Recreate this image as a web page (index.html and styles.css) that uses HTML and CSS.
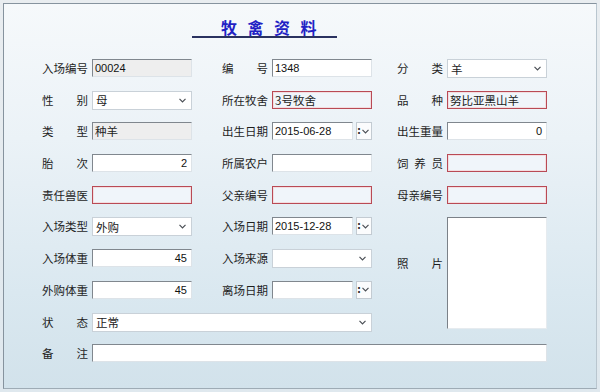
FILE: index.html
```html
<!DOCTYPE html>
<html lang="zh-CN">
<head>
<meta charset="utf-8">
<title>牧禽资料</title>
<link rel="stylesheet" href="styles.css">
</head>
<body>
<div class="frame">
  <div class="title">牧禽资料</div>
  <div class="form">
    <span class="lbl c1">入场编号</span>
    <div class="field ro txt">00024</div>
    <span class="lbl">编 号</span>
    <div class="field txt">1348</div>
    <span class="lbl">分 类</span>
    <div class="sel"><span>羊</span><svg class="chev" viewBox="0 0 7 5"><path d="M0.5 0.8 L3.5 3.8 L6.5 0.8" /></svg></div>

    <span class="lbl c1">性 别</span>
    <div class="sel"><span>母</span><svg class="chev" viewBox="0 0 7 5"><path d="M0.5 0.8 L3.5 3.8 L6.5 0.8" /></svg></div>
    <span class="lbl">所在牧舍</span>
    <div class="field req">3号牧舍</div>
    <span class="lbl">品 种</span>
    <div class="field req">努比亚黑山羊</div>

    <span class="lbl c1">类 型</span>
    <div class="field ro">种羊</div>
    <span class="lbl">出生日期</span>
    <div class="date"><div class="field txt">2015-06-28</div><div class="spin"><span class="colon">:</span><svg class="chev" viewBox="0 0 7 5"><path d="M0.5 0.8 L3.5 3.8 L6.5 0.8" /></svg></div></div>
    <span class="lbl">出生重量</span>
    <div class="field txt num">0</div>

    <span class="lbl c1">胎 次</span>
    <div class="field txt num">2</div>
    <span class="lbl">所属农户</span>
    <div class="field"></div>
    <span class="lbl">饲 养 员</span>
    <div class="field req"></div>

    <span class="lbl c1">责任兽医</span>
    <div class="field req"></div>
    <span class="lbl">父亲编号</span>
    <div class="field req"></div>
    <span class="lbl">母亲编号</span>
    <div class="field req"></div>

    <span class="lbl c1">入场类型</span>
    <div class="sel"><span>外购</span><svg class="chev" viewBox="0 0 7 5"><path d="M0.5 0.8 L3.5 3.8 L6.5 0.8" /></svg></div>
    <span class="lbl">入场日期</span>
    <div class="date"><div class="field txt">2015-12-28</div><div class="spin"><span class="colon">:</span><svg class="chev" viewBox="0 0 7 5"><path d="M0.5 0.8 L3.5 3.8 L6.5 0.8" /></svg></div></div>
    <div class="photo"></div>

    <span class="lbl c1">入场体重</span>
    <div class="field txt num">45</div>
    <span class="lbl">入场来源</span>
    <div class="sel"><span></span><svg class="chev" viewBox="0 0 7 5"><path d="M0.5 0.8 L3.5 3.8 L6.5 0.8" /></svg></div>
    <span class="lbl photo-lbl">照 片</span>

    <span class="lbl c1">外购体重</span>
    <div class="field txt num">45</div>
    <span class="lbl">离场日期</span>
    <div class="date"><div class="field txt"></div><div class="spin"><span class="colon">:</span><svg class="chev" viewBox="0 0 7 5"><path d="M0.5 0.8 L3.5 3.8 L6.5 0.8" /></svg></div></div>

    <span class="lbl c1">状 态</span>
    <div class="sel span-status"><span>正常</span><svg class="chev" viewBox="0 0 7 5"><path d="M0.5 0.8 L3.5 3.8 L6.5 0.8" /></svg></div>

    <span class="lbl c1">备 注</span>
    <div class="field span-note"></div>
  </div>
</div>
</body>
</html>
```

FILE: styles.css
```css
* { box-sizing: border-box; }

html, body {
  margin: 0;
  padding: 0;
}

body {
  width: 600px;
  height: 392px;
  background: linear-gradient(#e9edf0, #dfe8ee);
  font-family: "Noto Sans CJK SC", "DejaVu Sans", sans-serif;
  color: #222;
  overflow: hidden;
}

.frame {
  margin: 3px 0 0 3px;
  width: 594px;
  height: 386px;
  border: 1px solid #86939e;
  border-right-color: #b9c6cf;
  border-bottom-color: #9eabb5;
  background: linear-gradient(#f6f9fb 0%, #ebf2f7 35%, #dae8f0 75%, #d2e2eb 100%);
  padding: 15px 0 0 38px;
}

.title {
  margin-left: 150px;
  width: 145px;
  height: 19px;
  border-bottom: 2px solid #2a3260;
  padding-left: 29px;
  font-size: 16px;
  line-height: 17px;
  font-weight: bold;
  letter-spacing: 10.5px;
  color: #2121c4;
  white-space: nowrap;
}

.form {
  margin-top: 21px;
  display: grid;
  grid-template-columns: 50px 100px 80px 100px 75px 100px;
  grid-auto-rows: 18px;
  row-gap: 13.7px;
}

.lbl {
  justify-self: end;
  align-self: center;
  width: 46px;
  margin-right: 4px;
  font-size: 11.5px;
  line-height: 14px;
  text-align: justify;
  text-align-last: justify;
  white-space: nowrap;
  color: #1e1e1e;
}

.c1 { grid-column: 1; }

.field {
  height: 18px;
  border: 1px solid;
  border-color: #80878e #dde3e8 #dde3e8 #80878e;
  background: #fff;
  display: flex;
  align-items: center;
  padding: 0 2px;
  font-size: 11.5px;
  line-height: 14px;
  white-space: nowrap;
  overflow: hidden;
}

.txt {
  font-family: "Liberation Sans", "Noto Sans CJK SC", sans-serif;
  font-size: 11px;
  color: #111;
}

.ro { background: #eeeeee; }

.num {
  justify-content: flex-end;
  padding-right: 4px;
}

.req {
  border: 1px solid #b94a55;
  box-shadow: inset 0 0 0 1px #f3dde0;
  background: #f0f5fa;
}

.sel {
  height: 19px;
  border: 1px solid #c9d1d8;
  background: #fff;
  display: flex;
  align-items: center;
  justify-content: space-between;
  padding: 0 5px 0 3px;
  font-size: 11.5px;
  line-height: 14px;
}

.chev {
  width: 7px;
  height: 5px;
  fill: none;
  stroke: #4a4f55;
  stroke-width: 1.2;
  flex: none;
}

.date {
  display: flex;
  gap: 3px;
}

.date .field { width: 81px; }

.spin {
  width: 16px;
  height: 18px;
  border: 1px solid #c3cbd2;
  background: #fbfcfd;
  display: flex;
  align-items: center;
  justify-content: flex-end;
  gap: 1px;
  padding-right: 2px;
}

.colon {
  font-family: "DejaVu Sans", sans-serif;
  font-size: 10px;
  font-weight: bold;
  line-height: 10px;
  color: #333;
}

.photo {
  grid-column: 6;
  grid-row: 6 / span 4;
  height: 112px;
  border: 1px solid;
  border-color: #7b8188 #e6ebef #e6ebef #7b8188;
  background: #fff;
}

.photo-lbl {
  grid-column: 5;
  grid-row: 7;
  margin-top: 9px;
}

.span-status { grid-column: 2 / 5; }

.span-note { grid-column: 2 / 7; }
```
